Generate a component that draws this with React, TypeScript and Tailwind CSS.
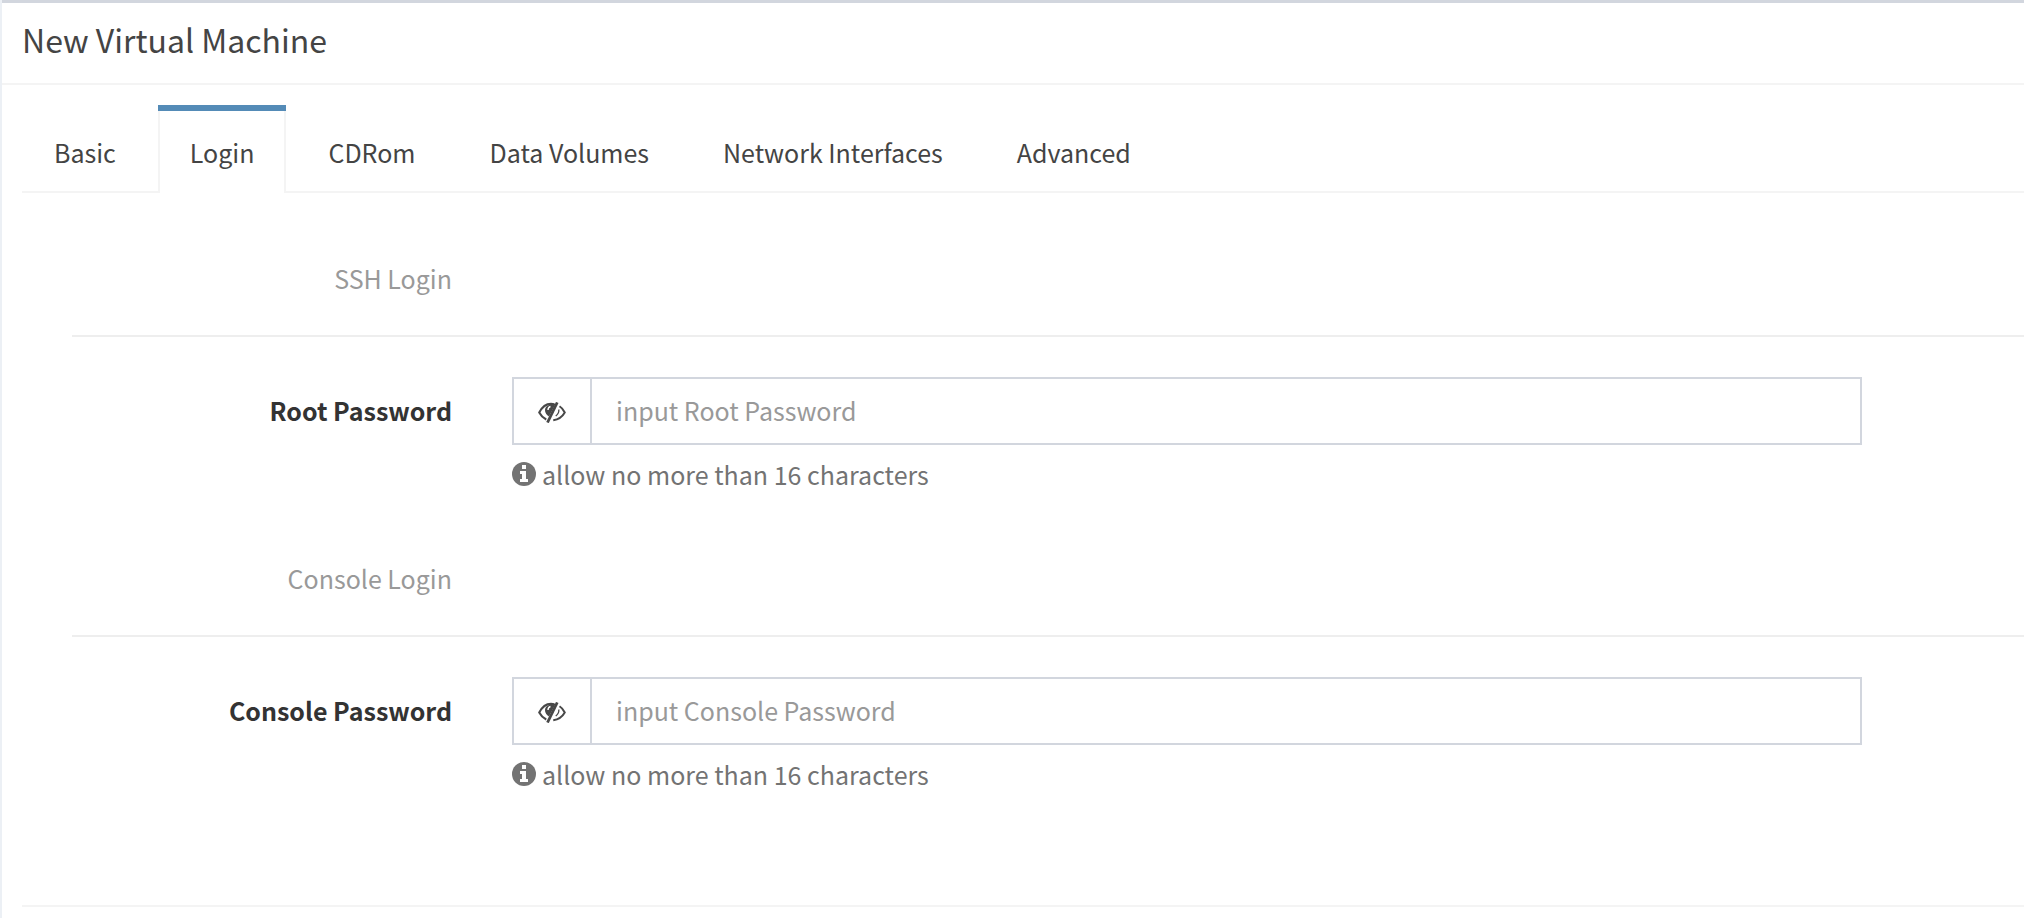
import { useState } from "react";

const TABS = ["Basic", "Login", "CDRom", "Data Volumes", "Network Interfaces", "Advanced"];

function EyeCloseIcon() {
  return (
    <svg viewBox="0 0 56 42" className="h-[21px] w-7" fill="none" aria-hidden="true">
      <path d="M33 4.500C18 1 8 10 2.500 21c3 6 8 11 14 14" stroke="#484848" strokeWidth="4.200" />
      <path d="M35 4C24 3 14 8 14 16c0 6 3 10 8 13Z" fill="#484848" />
      <path d="M38.500 1 19 41" stroke="#484848" strokeWidth="5.600" />
      <path d="M25 9c-4 1-5 4-5 7" stroke="#fff" strokeWidth="2.800" />
      <path d="M43 8.500c5 3 8 7 10.500 12.500-5 9-13 14-23 15.500" stroke="#484848" strokeWidth="4" />
      <path d="M41.500 15c1 5-1 9-6 13" stroke="#484848" strokeWidth="2.600" />
    </svg>
  );
}

function InfoIcon() {
  return (
    <svg viewBox="0 0 24 24" className="size-6 shrink-0" aria-hidden="true">
      <circle cx="12" cy="12" r="12" fill="#737373" />
      <path d="M10 3h4v4h-4zM8 9h6v8h2v3H8v-3h2v-5H8z" fill="#fff" />
    </svg>
  );
}

function SectionTitle({ children }: { children: string }) {
  return (
    <div className="flex h-[120px] border-b-2 border-[#eee] pt-[41px]">
      <h2 className="w-[380px] text-right text-[#999]">{children}</h2>
    </div>
  );
}

function PasswordField({ id, label }: { id: string; label: string }) {
  const [visible, setVisible] = useState(false);
  return (
    <div className="flex h-[180px] pt-10">
      <label htmlFor={id} className="w-[380px] shrink-0 pt-[13px] text-right font-bold text-[#333]">
        {label}
      </label>
      <div className="ml-[60px] mr-[162px] grow">
        <div className="flex h-[68px] border-2 border-[#d2d6de]">
          <button
            type="button"
            aria-label={`Show ${label}`}
            onClick={() => setVisible(!visible)}
            className="flex w-[78px] shrink-0 items-center justify-center border-r-2 border-[#d2d6de] pt-[2px]"
          >
            <EyeCloseIcon />
          </button>
          <input
            id={id}
            type={visible ? "text" : "password"}
            maxLength={16}
            placeholder={`input ${label}`}
            className="min-w-0 grow px-6 pb-[2px] text-[#555] outline-none placeholder:text-[#999]"
          />
        </div>
        <p className="mt-[9px] flex items-center gap-[6px] text-[#737373]">
          <InfoIcon />
          allow no more than 16 characters
        </p>
      </div>
    </div>
  );
}

export default function App() {
  const [active, setActive] = useState("Login");
  return (
    <div className="min-h-screen border-l-2 border-[#ecf0f5] bg-white font-['Noto_Sans_CJK_SC','Source_Sans_Pro',sans-serif] text-[25px] leading-10 text-[#444]">
      <header className="h-[85px] border-t-[3px] border-b-2 border-t-[#d2d6de] border-b-[#f4f4f4] px-5 pt-4">
        <h1 className="text-[32px]">New Virtual Machine</h1>
      </header>
      <main className="pl-5 pt-5">
        <div role="tablist" className="flex h-[88px] gap-[10px] border-b-2 border-[#f4f4f4]">
          {TABS.map((tab) => (
            <button
              key={tab}
              type="button"
              role="tab"
              aria-selected={tab === active}
              onClick={() => setActive(tab)}
              className={
                tab === active
                  ? "-mb-[2px] border-t-6 border-[#548bb7] bg-white"
                  : "-mb-[2px] border-t-6 border-transparent"
              }
            >
              <span
                className={
                  tab === active
                    ? "flex h-full items-center border-x-2 border-[#f4f4f4] px-[30px]"
                    : "flex h-full items-center border-x-2 border-transparent px-[30px]"
                }
              >
                {tab}
              </span>
            </button>
          ))}
        </div>
        <form className="ml-[50px] pt-6">
          <SectionTitle>SSH Login</SectionTitle>
          <PasswordField id="root-password" label="Root Password" />
          <SectionTitle>Console Login</SectionTitle>
          <PasswordField id="console-password" label="Console Password" />
        </form>
        <hr className="mt-[88px] border-t-2 border-[#f4f4f4]" />
      </main>
    </div>
  );
}
